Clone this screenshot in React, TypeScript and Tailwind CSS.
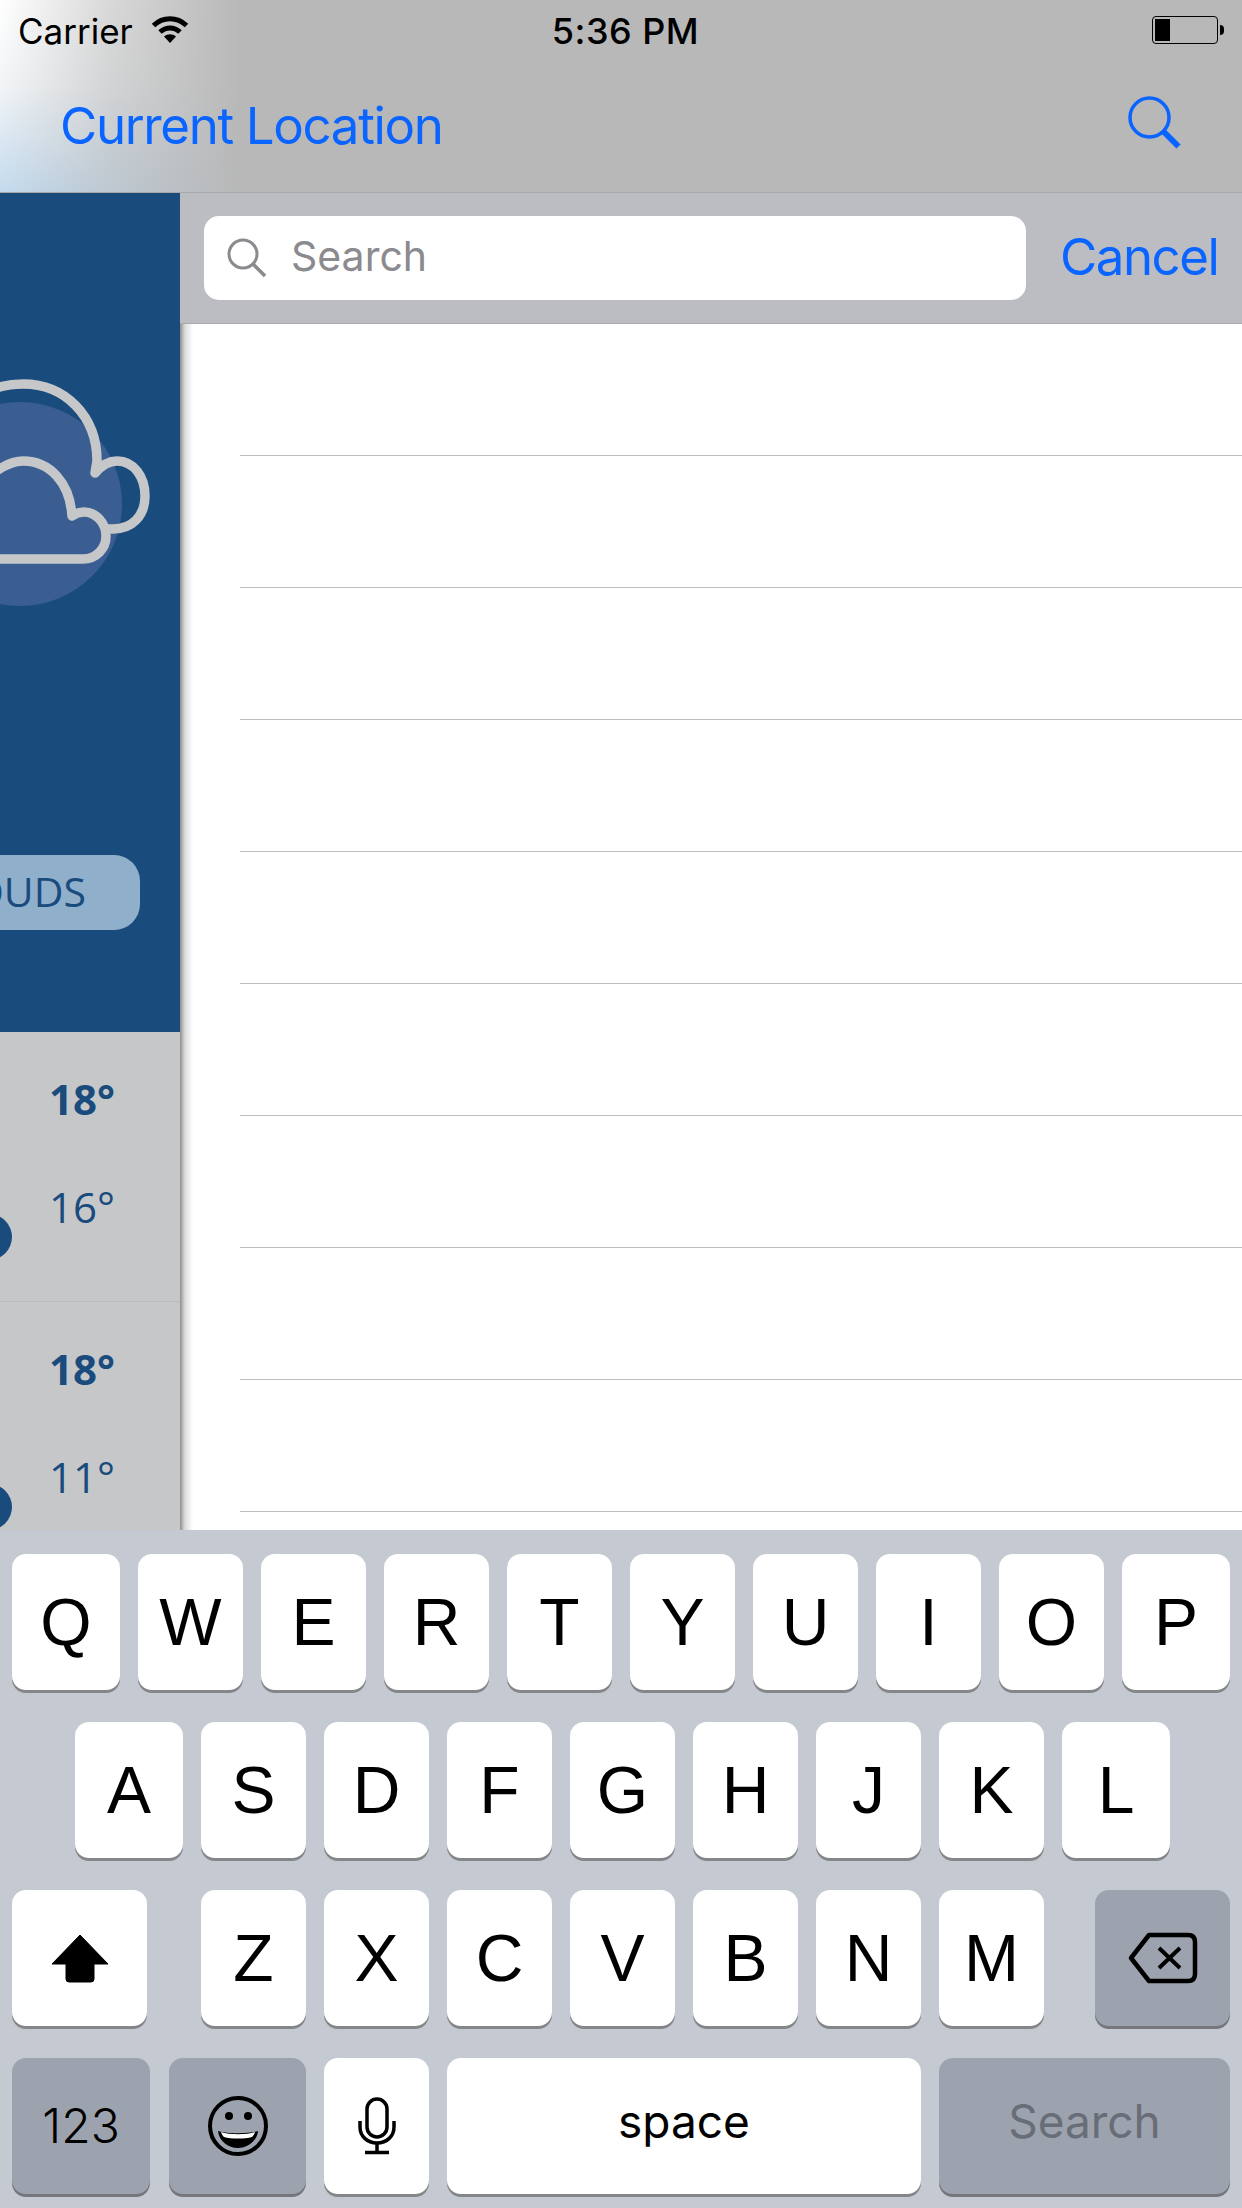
import React from "react";

const rowOne = ["Q", "W", "E", "R", "T", "Y", "U", "I", "O", "P"];
const rowTwo = ["A", "S", "D", "F", "G", "H", "J", "K", "L"];
const rowThree = ["Z", "X", "C", "V", "B", "N", "M"];

const Key = ({ label, width = "w-[105px]" }: { label: string; width?: string }) => (
  <div className={`flex h-[136px] ${width} items-center justify-center rounded-[14px] bg-white font-['Liberation_Sans',sans-serif] text-[66px] leading-none text-black shadow-[0_3px_0_#85868a]`}>
    {label}
  </div>
);

const DarkKey = ({ width, children }: { width: string; children: React.ReactNode }) => (
  <div className={`flex h-[136px] ${width} items-center justify-center rounded-[14px] bg-[#9da3ae] shadow-[0_3px_0_#75777d]`}>
    {children}
  </div>
);

const Temps = ({ high, low }: { high: string; low: string }) => (
  <div className="flex h-[270px] border-b border-[#b9babc]">
    <div className="mt-[182px] ml-[-34px] h-[46px] w-[46px] shrink-0 rounded-full bg-[#1a4b7d]" />
    <div className="ml-[37px] flex flex-col pt-[37px] text-[42px] leading-[60px] text-[#1a4b7d]">
      <span className="font-bold">{high}</span>
      <span className="mt-[48px]">{low}</span>
    </div>
  </div>
);

const SearchRow = () => (
  <div className="h-[132px] pl-[60px]">
    <div className="h-full border-b border-[#bdbdbf]" />
  </div>
);

export default function App() {
  return (
    <div className="flex h-[2208px] w-[1242px] flex-col overflow-hidden bg-white font-['Inter','Liberation_Sans',sans-serif]">
      {/* Nav header */}
      <div className="h-[193px] shrink-0 border-b border-[#a9a9a9] bg-[linear-gradient(to_right,rgba(184,184,184,0)_0px,rgba(184,184,184,0.55)_110px,#b8b8b8_240px),linear-gradient(to_bottom,#ffffff,#f2f5f7_45%,#c3dbee)]">
        <div className="relative flex h-[62px] items-center pl-[18px] text-[35px] text-black">
          <span>Carrier</span>
          <svg className="ml-[18px] mb-[4px]" width="38" height="29" viewBox="0 0 38 29">
            <path d="M2.5 10.5C12 1.5 26 1.5 35.5 10.5" fill="none" stroke="#000" strokeWidth="5" />
            <path d="M9 17C15 11.500 23 11.500 29 17" fill="none" stroke="#000" strokeWidth="5" />
            <path d="M13 21.500C16.500 18.500 21.500 18.500 25 21.500L19 28Z" fill="#000" />
          </svg>
          <span className="ml-[363px] text-[36px] font-medium tracking-[0.5px]">5:36 PM</span>
          <div className="absolute top-[16px] left-[1152px] flex items-center">
            <div className="h-[28px] w-[66px] rounded-[4px] border border-black p-[2px]">
              <div className="h-full w-[15px] bg-black" />
            </div>
            <div className="ml-[2px] h-[10px] w-[4px] rounded-r-full bg-black" />
          </div>
        </div>
        <div className="flex h-[130px] items-center justify-between pr-[60px] pl-[60px] text-[51px] text-[#0a64ff]">
          <span className="mt-[-1px] tracking-[-1.35px]">Current Location</span>
          <svg className="mb-[8px]" width="54" height="54" viewBox="0 0 54 54">
            <circle cx="21.500" cy="21.500" r="19.500" fill="none" stroke="#0a64ff" strokeWidth="3.500" />
            <path d="M35 35L50.500 50.500" stroke="#0a64ff" strokeWidth="6" />
          </svg>
        </div>
      </div>

      <div className="flex min-h-0 flex-1">
        {/* Weather panel behind the search */}
        <div className="flex w-[180px] shrink-0 flex-col overflow-hidden">
          <div className="flex h-[839px] shrink-0 flex-col bg-[#1a4b7d]">
            <svg className="mt-[168px] shrink-0" width="180" height="260" viewBox="0 0 180 260">
              <circle cx="20" cy="143" r="102" fill="#3a5e92" />
              <path d="M-45 60C-25 32 -3 23 23 23C65 23 97 55 97 100L95 112C102 104 110 100 117 100C134 100 145 116 145 135C145 155 132 168 113 168L108 168" fill="none" stroke="#c6c7c9" strokeWidth="9.500" strokeLinejoin="round" />
              <path d="M-10 115C2 105 12 100 23 100C50 100 70 122 72 155C76 152 80 151 84 151C96 151 106 162 106 175C106 188 96 198 83 198L-10 198" fill="none" stroke="#c6c7c9" strokeWidth="9.500" strokeLinejoin="round" />
            </svg>
            <div className="mt-[234px] flex h-[75px] w-[140px] items-center justify-end overflow-hidden rounded-r-[26px] bg-[#90afcb] pr-[54px] pb-[2px] font-['Open_Sans',sans-serif] text-[41px] whitespace-nowrap text-[#1a4b7d]">
              CLOUDS
            </div>
          </div>
          <div className="flex-1 overflow-hidden bg-[#c6c7c9] font-['Open_Sans',sans-serif]">
            <Temps high="18°" low="16°" />
            <Temps high="18°" low="11°" />
          </div>
        </div>

        {/* Search column */}
        <div className="flex min-w-0 flex-1 flex-col">
          <div className="flex h-[131px] shrink-0 items-center border-b border-[#a9a9ad] bg-[#bcbcc3] pl-[24px]">
            <div className="flex h-[84px] w-[822px] items-center rounded-[15px] bg-white pl-[23px] text-[41px] text-[#8a8a8f]">
              <svg width="40" height="40" viewBox="0 0 40 40">
                <circle cx="16" cy="16" r="14" fill="none" stroke="#8a8a8f" strokeWidth="3" />
                <path d="M26 26L38 38" stroke="#8a8a8f" strokeWidth="3.500" />
              </svg>
              <span className="mb-[3px] ml-[24px]">Search</span>
            </div>
            <span className="mb-[2px] ml-[34px] text-[51px] tracking-[-1.5px] text-[#0a64ff]">Cancel</span>
          </div>
          <div className="flex-1 overflow-hidden bg-[linear-gradient(to_right,#8f8f8f,#dcdcdc_5px,#ffffff_13px)]">
            <SearchRow />
            <SearchRow />
            <SearchRow />
            <SearchRow />
            <SearchRow />
            <SearchRow />
            <SearchRow />
            <SearchRow />
            <SearchRow />
          </div>
        </div>
      </div>

      {/* Keyboard */}
      <div className="flex h-[678px] shrink-0 flex-col gap-[32px] bg-[#c5c9d2] px-[12px] pt-[24px]">
        <div className="flex gap-[18px]">
          {rowOne.map((k, i) => (
            <Key key={k} label={k} width={i === 0 || i === 9 ? "w-[108px]" : "w-[105px]"} />
          ))}
        </div>
        <div className="flex gap-[18px] pl-[63px]">
          {rowTwo.map((k, i) => (
            <Key key={k} label={k} width={i === 0 || i === 8 ? "w-[108px]" : "w-[105px]"} />
          ))}
        </div>
        <div className="flex gap-[18px]">
          <div className="mr-[36px] flex h-[136px] w-[135px] items-center justify-center rounded-[14px] bg-white shadow-[0_3px_0_#85868a]">
            <svg width="58" height="49" viewBox="0 0 58 49">
              <path d="M29 1L57 30H43V45Q43 48 40 48H18Q15 48 15 45V30H1Z" fill="#000" stroke="#000" strokeWidth="1" strokeLinejoin="round" />
            </svg>
          </div>
          {rowThree.map((k) => (
            <Key key={k} label={k} />
          ))}
          <div className="ml-[33px]">
            <DarkKey width="w-[135px]">
              <svg width="70" height="52" viewBox="0 0 70 52">
                <path d="M21 3H60Q67 3 67 10V42Q67 49 60 49H21L3 26Z" fill="none" stroke="#000" strokeWidth="4.500" strokeLinejoin="round" />
                <path d="M31 16L52 36M52 16L31 36" stroke="#000" strokeWidth="4" />
              </svg>
            </DarkKey>
          </div>
        </div>
        <div className="flex gap-[18px]">
          <DarkKey width="w-[138px]">
            <span className="text-[48px] font-light text-black">123</span>
          </DarkKey>
          <div className="ml-[1px]">
            <DarkKey width="w-[137px]">
              <svg width="62" height="62" viewBox="0 0 62 62">
                <circle cx="31" cy="31" r="28" fill="none" stroke="#000" strokeWidth="4" />
                <circle cx="22" cy="21" r="4" fill="#000" />
                <circle cx="41" cy="21" r="4" fill="#000" />
                <path d="M11 36C20 39 42 39 51 36C50 46 41 53 31 53C21 53 12 46 11 36Z" fill="#000" />
                <path d="M14 37C22 40 40 40 48 37C47 40 46 41 45 42C38 44 24 44 17 42C16 41 15 40 14 37Z" fill="#fff" />
              </svg>
            </DarkKey>
          </div>
          <div className="flex h-[136px] w-[105px] items-center justify-center rounded-[14px] bg-white shadow-[0_3px_0_#85868a]">
            <svg width="38" height="58" viewBox="0 0 38 58">
              <rect x="9" y="2" width="20" height="38" rx="10" fill="none" stroke="#000" strokeWidth="3.500" />
              <path d="M2 24V30C2 39 9 46 19 46C29 46 36 39 36 30V24" fill="none" stroke="#000" strokeWidth="3.500" />
              <path d="M19 46V55M7 55.500H31" stroke="#000" strokeWidth="3.500" />
            </svg>
          </div>
          <div className="flex h-[136px] w-[474px] items-center justify-center rounded-[14px] bg-white pb-[9px] text-[46px] text-black shadow-[0_3px_0_#85868a]">
            space
          </div>
          <DarkKey width="w-[291px]">
            <span className="pb-[9px] text-[46px] text-[#686d78]">Search</span>
          </DarkKey>
        </div>
      </div>
    </div>
  );
}
